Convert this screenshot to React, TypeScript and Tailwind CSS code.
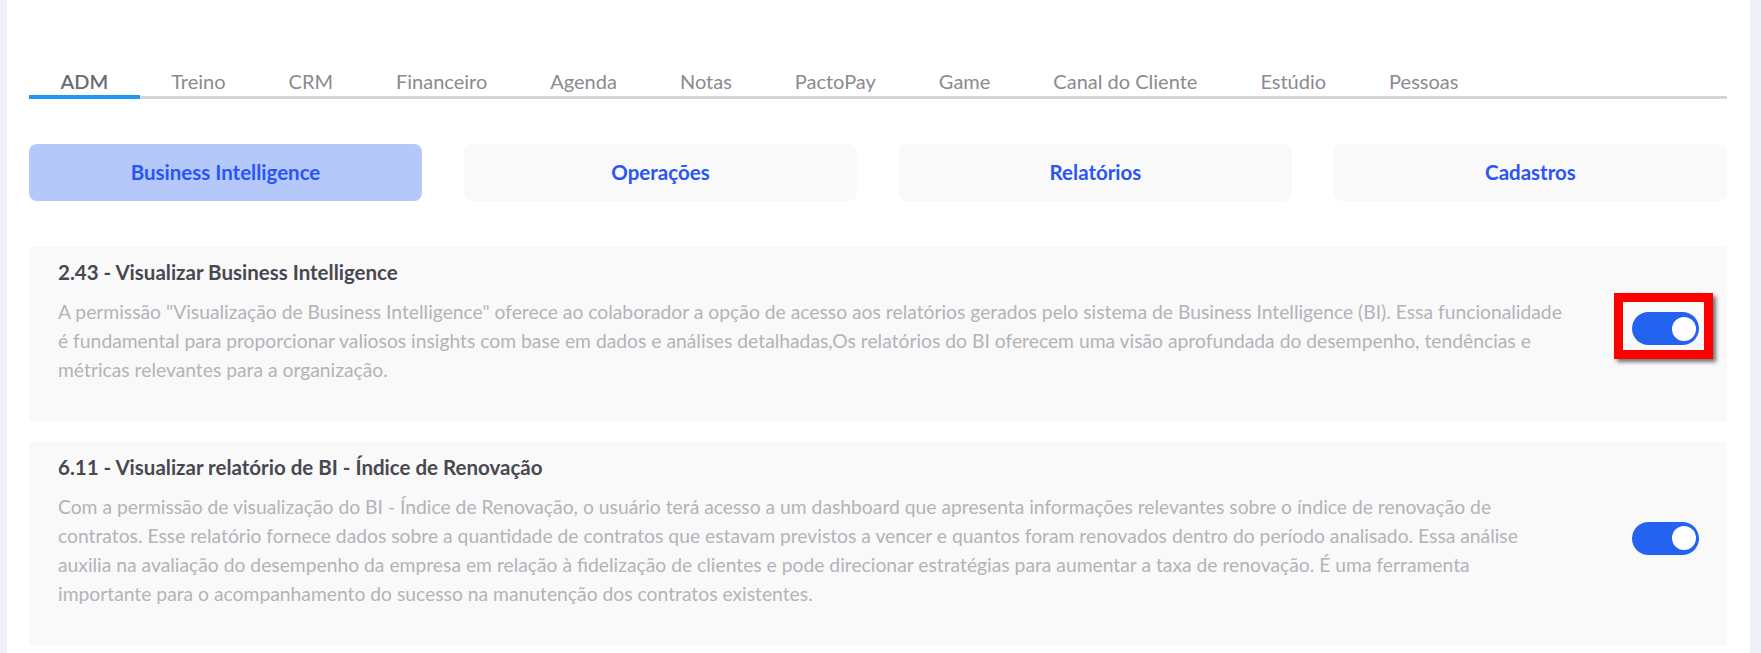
import React from "react";

const tabs = ["ADM", "Treino", "CRM", "Financeiro", "Agenda", "Notas", "PactoPay", "Game", "Canal do Cliente", "Estúdio", "Pessoas"];
const sections = ["Business Intelligence", "Operações", "Relatórios", "Cadastros"];

type Permission = {
    id: string;
    title: string;
    lines: string[];
    highlighted?: boolean;
};

const permissions: Permission[] = [
    {
        id: "2.43",
        title: "2.43 - Visualizar Business Intelligence",
        lines: [
            "A permissão \"Visualização de Business Intelligence\" oferece ao colaborador a opção de acesso aos relatórios gerados pelo sistema de Business Intelligence (BI). Essa funcionalidade",
            "é fundamental para proporcionar valiosos insights com base em dados e análises detalhadas,Os relatórios do BI oferecem uma visão aprofundada do desempenho, tendências e",
            "métricas relevantes para a organização.",
        ],
        highlighted: true,
    },
    {
        id: "6.11",
        title: "6.11 - Visualizar relatório de BI - Índice de Renovação",
        lines: [
            "Com a permissão de visualização do BI - Índice de Renovação, o usuário terá acesso a um dashboard que apresenta informações relevantes sobre o índice de renovação de",
            "contratos. Esse relatório fornece dados sobre a quantidade de contratos que estavam previstos a vencer e quantos foram renovados dentro do período analisado. Essa análise",
            "auxilia na avaliação do desempenho da empresa em relação à fidelização de clientes e pode direcionar estratégias para aumentar a taxa de renovação. É uma ferramenta",
            "importante para o acompanhamento do sucesso na manutenção dos contratos existentes.",
        ],
    },
];

function Toggle({ highlighted }: { highlighted?: boolean }) {
    return (
        <div className="relative mt-[14px] flex h-[33px] w-[67px] shrink-0 items-center justify-end rounded-full bg-[#2463f0] pr-[3px]">
            <div className="h-6 w-6 rounded-full bg-white" />
            {highlighted && (
                <div className="absolute -top-[19px] -left-[18px] -right-[14px] -bottom-[14px] border-[9px] border-[#ff0000] shadow-[3px_3px_4px_rgba(0,0,0,0.55)]" />
            )}
        </div>
    );
}

export default function App() {
    return (
        <div className="flex h-[653px] w-full font-['Lato',sans-serif]">
            <div className="w-[7px] shrink-0 bg-[#eef2f7]" />
            <div className="min-w-0 flex-1 bg-white pl-[22px] pr-[23px] pt-[67px]">
                <div className="flex border-b-[3px] border-[#d2d4dc]">
                    {tabs.map((tab, index) => (
                        <div
                            key={tab}
                            className={
                                index === 0
                                    ? "-mb-[3px] border-b-4 border-[#2196f3] px-[31.5px] text-[20px] leading-[28px] font-semibold text-[#6b6b70]"
                                    : "-mb-[3px] border-b-4 border-transparent px-[31.5px] text-[20px] leading-[28px] text-[#8a8a90]"
                            }
                        >
                            {tab}
                        </div>
                    ))}
                </div>

                <div className="mt-[45px] grid grid-cols-4 gap-[42px]">
                    {sections.map((section, index) => (
                        <div
                            key={section}
                            className={
                                index === 0
                                    ? "flex h-[57px] items-center justify-center rounded-lg bg-[#b4c9fa] text-[20.5px] font-bold text-[#2a55f6]"
                                    : "flex h-[57px] items-center justify-center rounded-lg bg-[#f9f9fa] text-[20.5px] font-bold text-[#2a55f6]"
                            }
                        >
                            {section}
                        </div>
                    ))}
                </div>

                <div className="mt-[46px] space-y-[21px]">
                    {permissions.map((permission) => (
                        <div key={permission.id} className="flex items-center gap-6 bg-[#f9f9f9] pl-[29px] pr-[28px] pt-[12px] pb-[37px]">
                            <div className="min-w-0 flex-1">
                                <h3 className="text-[20.5px] leading-[26px] font-bold text-[#484851]">{permission.title}</h3>
                                <p className="mt-3 whitespace-nowrap text-[19.3px] leading-[29px] text-[#b3b3b8]">
                                    {permission.lines.map((line, index) => (
                                        <React.Fragment key={index}>
                                            {index > 0 && <br />}
                                            {line}
                                        </React.Fragment>
                                    ))}
                                </p>
                            </div>
                            <Toggle highlighted={permission.highlighted} />
                        </div>
                    ))}
                </div>
            </div>
            <div className="w-[11px] shrink-0 bg-[#eef2f7]" />
        </div>
    );
}
